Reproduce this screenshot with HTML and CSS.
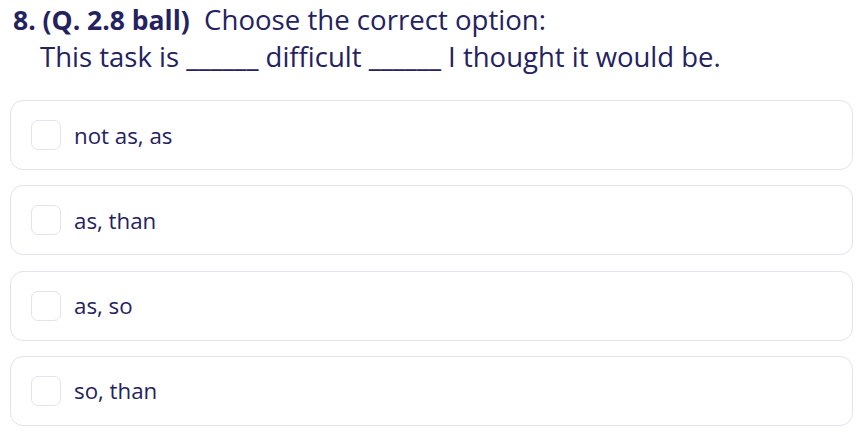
FILE: index.html
```html
<!DOCTYPE html>
<html>
<head>
<meta charset="utf-8">
<link rel="stylesheet" href="styles.css">
</head>
<body>
<div class="question">
  <div class="title"><span class="num">8. (Q. 2.8 ball)</span>  Choose the correct option:</div>
  <div class="prompt">This task is ______ difficult ______ I thought it would be.</div>
</div>
<div class="options">
  <label class="option"><span class="box"></span><span class="text">not as, as</span></label>
  <label class="option"><span class="box"></span><span class="text">as, than</span></label>
  <label class="option"><span class="box"></span><span class="text">as, so</span></label>
  <label class="option"><span class="box"></span><span class="text">so, than</span></label>
</div>
</body>
</html>
```
FILE: styles.css
```css
* { box-sizing: border-box; }
body {
  margin: 0;
  padding: 0 3px 0 10px;
  font-family: "Open Sans", sans-serif;
  color: #24225f;
  background: #fff;
}
.question {
  padding: 1px 0 0 3px;
}
.title {
  font-size: 27.6px;
  line-height: 36px;
  white-space: pre;
}
.num { font-weight: 700; font-size: 26.5px; }
.prompt {
  font-size: 27.5px;
  line-height: 38px;
  padding-left: 27px;
}
.options {
  display: flex;
  flex-direction: column;
  gap: 15.3px;
  margin-top: 24px;
}
.option {
  display: flex;
  align-items: center;
  height: 70px;
  border: 1px solid #e3e2ef;
  border-radius: 13px;
  padding-left: 20px;
}
.box {
  width: 30px;
  height: 30px;
  border: 1px solid #e3e2ef;
  border-radius: 7px;
  margin-right: 13px;
}
.text {
  font-size: 22.3px;
}
```
